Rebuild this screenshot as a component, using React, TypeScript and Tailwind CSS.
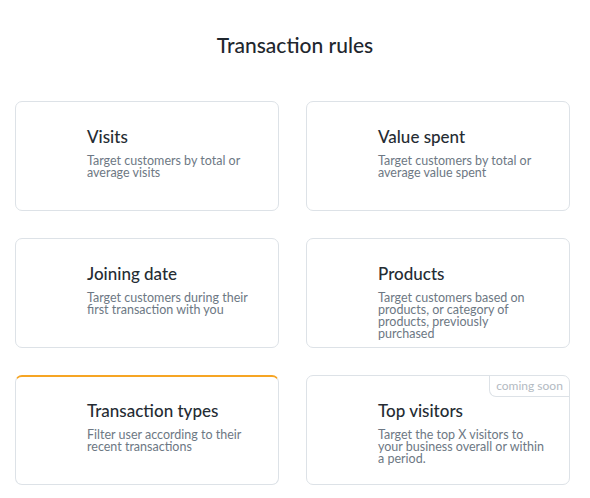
const rules = [
  {
    title: "Visits",
    text: "Target customers by total or average visits",
  },
  {
    title: "Value spent",
    text: "Target customers by total or average value spent",
  },
  {
    title: "Joining date",
    text: "Target customers during their first transaction with you",
  },
  {
    title: "Products",
    text: "Target customers based on products, or category of products, previously purchased",
  },
  {
    title: "Transaction types",
    text: "Filter user according to their recent transactions",
    active: true,
  },
  {
    title: "Top visitors",
    text: "Target the top X visitors to your business overall or within a period.",
    soon: true,
  },
];

function RuleCard({
  title,
  text,
  active,
  soon,
}: {
  title: string;
  text: string;
  active?: boolean;
  soon?: boolean;
}) {
  return (
    <div
      className={`relative h-[110px] overflow-hidden rounded-[7px] border border-[#dde2e7] bg-white pl-[71px] ${
        active ? "border-t-2 border-t-[#f6a524] pt-[24px]" : "pt-[25px]"
      }`}
    >
      {soon && (
        <div className="absolute top-0 right-0 flex h-[21px] w-[80px] items-center justify-center rounded-bl-[7px] border-b border-l border-[#dde2e7] text-[12px] text-[#b3bac2]">
          coming soon
        </div>
      )}
      <h3 className="text-[17px] leading-[20px] font-medium text-[#252c33]">{title}</h3>
      <p className="mt-[8px] w-[168px] text-[12.5px] leading-[12px] text-[#6d7884]">{text}</p>
    </div>
  );
}

export default function App() {
  return (
    <div className="h-[498px] w-[590px] bg-white font-['Lato',sans-serif]">
      <h1 className="pt-[33px] text-center text-[21px] leading-[24px] font-medium text-[#1f272e]">
        Transaction rules
      </h1>
      <div className="mt-[44px] grid grid-cols-[264px_264px] gap-[27px] pl-[15px]">
        {rules.map((r) => (
          <RuleCard key={r.title} {...r} />
        ))}
      </div>
    </div>
  );
}
